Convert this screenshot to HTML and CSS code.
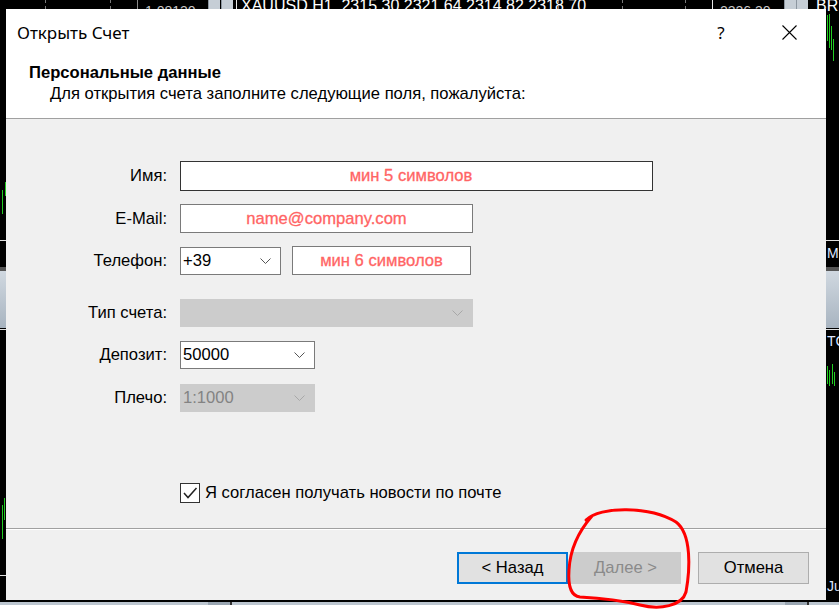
FILE: index.html
```html
<!DOCTYPE html>
<html>
<head>
  <meta charset="UTF-8">
  <title>Открыть Счет</title>
  <link rel="stylesheet" href="styles.css">
</head>
<body>
  <!-- terminal chart behind the dialog -->
  <div class="chart">
    <span class="grid-v" style="left:45px"></span>
    <span class="grid-v" style="left:110px"></span>
    <span class="grid-v" style="left:558px"></span>
    <span class="grid-v" style="left:622px"></span>
    <span class="grid-v" style="left:685px"></span>
    <span class="sep-v" style="left:137px"></span>
    <span class="sep-v white" style="left:236px"></span>
    <span class="sep-v white" style="left:712px"></span>
    <span class="price" style="left:145px">1.08130</span>
    <span class="price" style="left:720px">2326.30</span>
    <span class="mini-btn" style="left:208px"></span>
    <span class="mini-btn" style="left:221px"></span>
    <span class="mini-btn" style="left:784px"></span>
    <span class="mini-btn" style="left:796px"></span>
    <span class="symbol" style="left:241px">XAUUSD,H1&nbsp; 2315.30 2321.64 2314.82 2318.70</span>
    <span class="symbol" style="left:816px">BRN</span>

    <span class="side-panel" style="left:0"></span>
    <span class="side-panel" style="left:826px"></span>
    <span class="hline" style="left:0;top:240px"></span>
    <span class="hline" style="left:0;top:329px"></span>
    <span class="hline" style="left:0;top:575px"></span>
    <span class="hline" style="left:826px;top:240px"></span>
    <span class="hline" style="left:826px;top:329px"></span>
    <span class="green" style="left:2px;top:190px;height:24px"></span>
    <span class="green" style="left:5px;top:182px;height:14px"></span>
    <span class="green" style="left:2px;top:505px;height:34px"></span>
    <span class="green" style="left:4px;top:498px;height:22px"></span>
    <span class="green" style="left:827px;top:15px;height:26px"></span>
    <span class="green" style="left:829px;top:14px;height:34px"></span>
    <span class="green" style="left:831px;top:26px;height:24px"></span>
    <span class="green" style="left:833px;top:39px;height:22px"></span>
    <span class="green" style="left:827px;top:366px;height:18px"></span>
    <span class="green" style="left:829px;top:370px;height:16px"></span>
    <span class="green" style="left:832px;top:364px;height:20px"></span>
    <span class="green" style="left:834px;top:372px;height:14px"></span>
    <span class="side-text" style="top:245px">M</span>
    <span class="side-text" style="top:333px">TC</span>
    <span class="side-text" style="top:578px">Ju</span>
    <div class="taskbar">
      <span class="task-btn" style="left:208px"></span>
      <span class="task-btn" style="left:785px"></span>
    </div>
  </div>

  <div class="dialog">
    <div class="head">
      <div class="titlebar">
        <span class="title">Открыть Счет</span>
        <span class="tb-btn">?</span>
        <span class="tb-btn">
          <svg width="15" height="15" viewBox="0 0 15 15"><path d="M0.5 0.5 L14.5 14.5 M14.5 0.5 L0.5 14.5" stroke="#000" stroke-width="1.1" fill="none"/></svg>
        </span>
      </div>
      <div class="intro">
        <div class="intro-title">Персональные данные</div>
        <div class="intro-text">Для открытия счета заполните следующие поля, пожалуйста:</div>
      </div>
    </div>

    <div class="body">
      <div class="form">
        <div class="row r-name">
          <span class="label">Имя:</span>
          <div class="field focus w-long hint">мин 5 символов</div>
        </div>
        <div class="row r-mail">
          <span class="label">E-Mail:</span>
          <div class="field w-mid hint">name@company.com</div>
        </div>
        <div class="row r-phone">
          <span class="label">Телефон:</span>
          <div class="select w-code">
            <span>+39</span>
            <svg width="11" height="6" viewBox="0 0 11 6"><path d="M0.5 0.5 L5.5 5.5 L10.5 0.5" stroke="#555" fill="none"/></svg>
          </div>
          <div class="field w-phone hint">мин 6 символов</div>
        </div>
        <div class="row r-type">
          <span class="label">Тип счета:</span>
          <div class="select off w-mid">
            <span></span>
            <svg width="11" height="6" viewBox="0 0 11 6"><path d="M0.5 0.5 L5.5 5.5 L10.5 0.5" stroke="#a8a8a8" fill="none"/></svg>
          </div>
        </div>
        <div class="row r-dep">
          <span class="label">Депозит:</span>
          <div class="select w-short">
            <span>50000</span>
            <svg width="11" height="6" viewBox="0 0 11 6"><path d="M0.5 0.5 L5.5 5.5 L10.5 0.5" stroke="#555" fill="none"/></svg>
          </div>
        </div>
        <div class="row r-lev">
          <span class="label">Плечо:</span>
          <div class="select off w-short">
            <span>1:1000</span>
            <svg width="11" height="6" viewBox="0 0 11 6"><path d="M0.5 0.5 L5.5 5.5 L10.5 0.5" stroke="#a8a8a8" fill="none"/></svg>
          </div>
        </div>
      </div>

      <div class="agree">
        <span class="check">
          <svg width="18" height="18" viewBox="0 0 18 18"><path d="M3 9 L7 13.5 L15.5 4" stroke="#222" stroke-width="1.5" fill="none"/></svg>
        </span>
        <span>Я согласен получать новости по почте</span>
      </div>
    </div>

    <div class="foot">
      <button class="btn default">&lt; Назад</button>
      <button class="btn off">Далее &gt;</button>
      <button class="btn cancel">Отмена</button>
    </div>
  </div>

  <svg class="scribble" width="839" height="611" viewBox="0 0 839 611">
    <path d="M586 520 C600 506, 650 506, 676 522 C692 534, 690 570, 686 592 C682 606, 660 610, 640 605 C620 600, 600 598, 580 597 C570 596, 568 585, 569 570 C570 550, 578 532, 592 516" stroke="#ff0000" stroke-width="3" fill="none" stroke-linecap="round"/>
  </svg>
</body>
</html>
```

FILE: styles.css
```css
* {
  box-sizing: border-box;
}
body {
  margin: 0;
  width: 839px;
  height: 611px;
  overflow: hidden;
  position: relative;
  background: #000;
  font-family: "Liberation Sans", Arial, sans-serif;
  font-size: 16.6px;
  color: #000;
}

/* chart behind */
.chart span {
  position: absolute;
}
.grid-v {
  top: 0;
  height: 9px;
  border-left: 1px dashed #7a7a7a;
}
.sep-v {
  top: 0;
  height: 9px;
  width: 1px;
  background: #8a8a8a;
}
.sep-v.white {
  background: #e8e8e8;
}
.price {
  top: 3px;
  font-size: 14px;
  color: #c8c8c8;
}
.symbol {
  top: -3px;
  font-size: 16px;
  color: #fff;
}
.mini-btn {
  top: 0;
  width: 12px;
  height: 9px;
  background: #c6ced6;
  border-left: 1px solid #8c96a0;
}
.side-panel {
  top: 267px;
  width: 13px;
  height: 61px;
  background: linear-gradient(#d0d8e0, #a8b4c0);
  border-top: 4px solid #555;
}
.hline {
  width: 13px;
  height: 1px;
  background: #e0e0e0;
}
.green {
  width: 1px;
  background: #22cc22;
}
.side-text {
  left: 827px;
  font-size: 14px;
  color: #dde6ff;
}
.taskbar {
  position: absolute;
  left: 0;
  top: 600px;
  width: 839px;
  height: 11px;
  border-top: 2px solid #000;
  background: linear-gradient(#bcc6d0 0, #bcc6d0 3px, #fff 3px);
}
.taskbar .task-btn {
  top: 0;
  width: 24px;
  height: 3px;
  background: #9aa6b2;
  border-right: 2px solid #333;
}

/* dialog window */
.dialog {
  position: absolute;
  left: 6px;
  top: 9px;
  width: 820px;
  height: 591px;
  background: #f0f0f0;
  display: flex;
  flex-direction: column;
}
.head {
  height: 110px;
  background: #fff;
  border-bottom: 1px solid #a0a0a0;
}
.titlebar {
  height: 46px;
  display: flex;
  align-items: center;
}
.title {
  flex: 1;
  padding-left: 11px;
  font-family: "Noto Sans", "Open Sans", sans-serif;
  font-size: 17px;
  padding-top: 1px;
}
.tb-btn {
  width: 70px;
  height: 46px;
  display: flex;
  align-items: center;
  justify-content: center;
  font-family: "Noto Sans", sans-serif;
  font-size: 17px;
}
.tb-btn:last-child {
  padding-right: 3px;
}
.intro {
  padding-top: 8px;
  line-height: 19px;
}
.intro-title {
  padding-left: 23px;
  font-weight: bold;
  margin-bottom: 2px;
}
.intro-text {
  padding-left: 44px;
}

.body {
  flex: 1;
  padding-top: 42px;
}
.row {
  display: flex;
  align-items: center;
}
.label {
  width: 174px;
  padding-right: 13px;
  text-align: right;
}
.r-mail { margin-top: 13px; }
.r-phone { margin-top: 13px; }
.r-type { margin-top: 24px; }
.r-dep { margin-top: 14px; }
.r-lev { margin-top: 15px; }

.field {
  height: 29px;
  background: #fff;
  border: 1px solid #7a7a7a;
  display: flex;
  align-items: center;
  padding: 0 3px;
}
.field.focus {
  height: 30px;
  border-color: #333;
}
.hint {
  justify-content: center;
  color: #ff6464;
  -webkit-text-stroke: 0.3px #ff6464;
}
.field.focus.hint {
  padding-right: 14px;
}
.w-long { width: 473px; }
.w-mid { width: 293px; }
.w-phone { width: 179px; margin-left: 11px; }
.w-code { width: 101px; height: 27px; }
.w-short { width: 135px; }

.select {
  height: 28px;
  background: #fff;
  border: 1px solid #7a7a7a;
  display: flex;
  align-items: center;
  justify-content: space-between;
  padding: 0 9px 0 2px;
}
.select.off {
  background: #cccccc;
  border-color: #cccccc;
  color: #838383;
}

.agree {
  margin-top: 71px;
  padding-left: 174px;
  display: flex;
  align-items: center;
  gap: 5px;
}
.check {
  width: 20px;
  height: 20px;
  background: #fff;
  border: 1px solid #333;
  display: flex;
  align-items: center;
  justify-content: center;
}

.foot {
  height: 72px;
  border-top: 1px solid #a0a0a0;
  box-shadow: inset 0 1px 0 #fff;
  display: flex;
  justify-content: flex-end;
  align-items: flex-start;
  padding: 23px 17px 0 0;
}
.btn {
  width: 111px;
  height: 32px;
  font-family: "Liberation Sans", Arial, sans-serif;
  font-size: 16.6px;
  color: #000;
  background: #e1e1e1;
  border: 1px solid #adadad;
  padding: 0;
}
.btn.default {
  border: 2px solid #0078d7;
}
.btn.off {
  margin-left: 2px;
  background: #cccccc;
  border-color: #cccccc;
  color: #8a8a8a;
}
.btn.cancel {
  margin-left: 17px;
}

.scribble {
  position: absolute;
  left: 0;
  top: 0;
  pointer-events: none;
}
```
